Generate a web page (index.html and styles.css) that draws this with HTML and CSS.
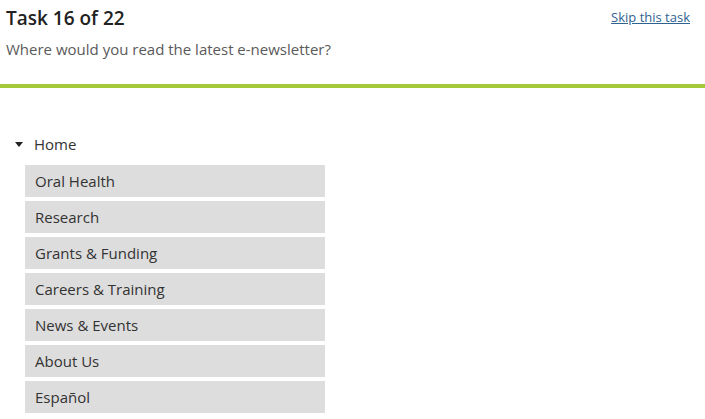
FILE: index.html
```html
<!DOCTYPE html>
<html lang="en">

<head>
    <meta charset="UTF-8">
    <meta name="viewport" content="width=device-width, initial-scale=1.0">
    <title>Task 16 of 22</title>
    <link rel="stylesheet" href="styles.css">
</head>

<body>
    <!-- task header -->
    <header class="task-header">
        <div class="task-top">
            <h1 class="task-title">Task 16 of 22</h1>
            <a class="skip-link" href="#">Skip this task</a>
        </div>
        <p class="task-question">Where would you read the latest e-newsletter?</p>
    </header>

    <!-- tree -->
    <main class="tree">
        <div class="tree-root">
            <span class="caret"></span>
            <span>Home</span>
        </div>
        <ul class="tree-list">
            <li class="tree-item">Oral Health</li>
            <li class="tree-item">Research</li>
            <li class="tree-item">Grants &amp; Funding</li>
            <li class="tree-item">Careers &amp; Training</li>
            <li class="tree-item">News &amp; Events</li>
            <li class="tree-item">About Us</li>
            <li class="tree-item">Español</li>
        </ul>
    </main>
</body>

</html>
```

FILE: styles.css
```css
:root {
    --green: #a4c93a;
    --item-bg: #dddddd;
    --text: #333333;
    --muted: #5a5a5a;
    --link: #30628f;
}

body {
    margin: 0;
    font-family: "Open Sans", Arial, sans-serif;
    color: var(--text);
    background: #fff;
}

/* header */
.task-header {
    padding: 6px 15px 0 6px;
    height: 78px;
    border-bottom: 4px solid var(--green);
}

.task-top {
    display: flex;
    justify-content: space-between;
    align-items: flex-start;
}

.task-title {
    margin: 0;
    font-size: 19px;
    font-weight: 600;
    line-height: 24px;
    color: #222;
}

.skip-link {
    font-size: 13px;
    line-height: 22px;
    color: var(--link);
}

.task-question {
    margin: 9px 0 0;
    font-size: 15px;
    line-height: 20px;
    color: var(--muted);
}

/* tree */
.tree {
    padding-top: 46px;
}

.tree-root {
    display: flex;
    align-items: center;
    gap: 11px;
    padding-left: 15px;
    height: 20px;
    font-size: 15px;
}

.caret {
    width: 0;
    height: 0;
    border-left: 4px solid transparent;
    border-right: 4px solid transparent;
    border-top: 5px solid #222;
}

.tree-list {
    list-style: none;
    margin: 11px 0 0 25px;
    padding: 0;
    width: 300px;
    display: flex;
    flex-direction: column;
    gap: 4px;
}

.tree-item {
    height: 32px;
    line-height: 33px;
    padding-left: 10px;
    background: var(--item-bg);
    font-size: 15px;
}
```
